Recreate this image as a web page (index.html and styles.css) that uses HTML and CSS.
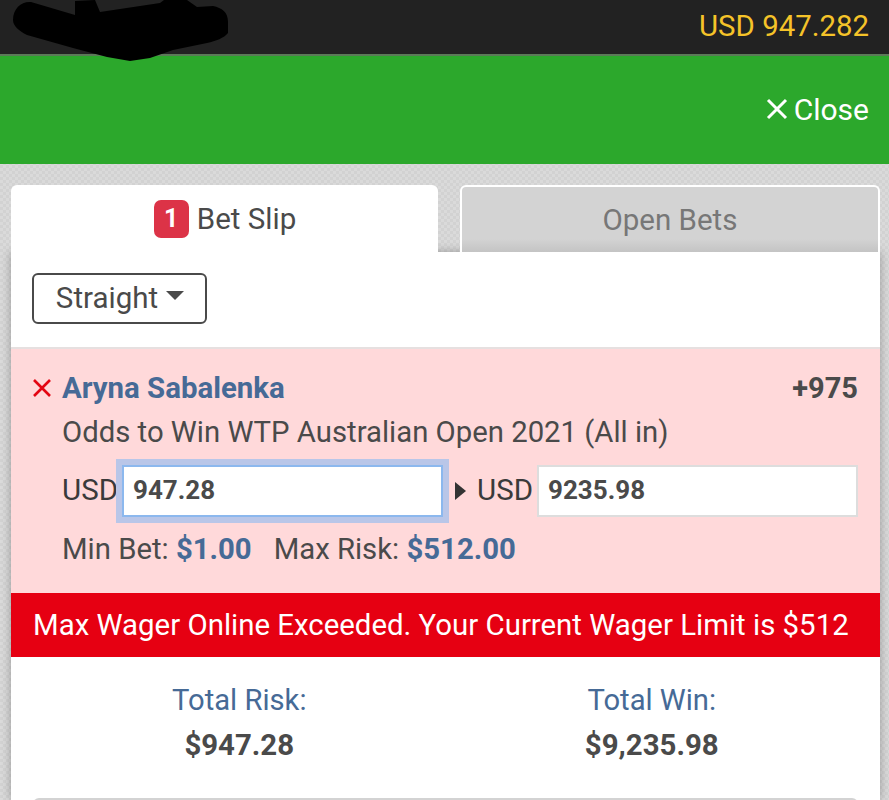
FILE: index.html
```html
<html>
<head>
    <link rel="stylesheet" href="styles.css">
</head>
<body>
<div class="topBar">
    <span class="balance">USD 947.282</span>
    <svg class="scribble" width="240" height="64" viewBox="0 0 240 64">
        <path d="M13 20C13 8 22 1 31 2L75 15L75 1L95 0L100 12L160 3L164 0L187 0L197 7L213 6C222 8 228 12 228 22L228 33C224 38 216 41 207 43L173 50L150 58L130 61L107 57L73 48L27 35C19 31 13 26 13 20Z" fill="#000"/>
    </svg>
</div>
<div class="greenBar">
    <span class="closeBtn">
        <svg width="22" height="22" viewBox="0 0 22 22"><path d="M2 2L20 20M20 2L2 20" stroke="#fff" stroke-width="3" fill="none"/></svg>
        Close
    </span>
</div>

<div class="slip">
    <div class="tabs">
        <div class="tab activeTab"><span class="badge">1</span> Bet Slip</div>
        <div class="tab otherTab">Open Bets</div>
    </div>
    <div class="panel">
        <div class="typeRow">
            <div class="typeBtn">Straight <span class="caret"></span></div>
        </div>
        <div class="betBox">
            <div class="betHead">
                <svg class="removeX" width="20" height="20" viewBox="0 0 20 20"><path d="M2 2L18 18M18 2L2 18" stroke="#e30613" stroke-width="2.6" fill="none"/></svg>
                <span class="player">Aryna Sabalenka</span>
                <span class="odds">+975</span>
            </div>
            <div class="betDesc">Odds to Win WTP Australian Open 2021 (All in)</div>
            <div class="inputRow">
                <span class="usd">USD</span>
                <input class="amount riskInput" type="text" value="947.28">
                <span class="arrow"></span>
                <span class="usd">USD</span>
                <input class="amount winInput" type="text" value="9235.98">
            </div>
            <div class="limits">
                <span>Min Bet: <b>$1.00</b></span>
                <span>Max Risk: <b>$512.00</b></span>
            </div>
        </div>
        <div class="errorBar">Max Wager Online Exceeded. Your Current Wager Limit is $512</div>
        <div class="totals">
            <div class="total">
                <div class="totalLabel">Total Risk:</div>
                <div class="totalValue">$947.28</div>
            </div>
            <div class="total">
                <div class="totalLabel">Total Win:</div>
                <div class="totalValue">$9,235.98</div>
            </div>
        </div>
        <div class="nextBtn"></div>
    </div>
</div>
</body>
</html>
```

FILE: styles.css
```css
html, body {
    margin: 0;
    height: 800px;
    overflow: hidden;
}
body {
    position: relative;
    font-family: Roboto, sans-serif;
    color: #4a4a4a;
    background-color: #d6d6d6;
    background-image: repeating-conic-gradient(#d2d2d2 0% 25%, #dadada 0% 50%);
    background-size: 6px 6px;
}
.topBar {
    height: 51px;
    background: #222222;
    border-bottom: 2px solid #5b7a58;
    display: flex;
    justify-content: flex-end;
    align-items: center;
    padding: 0 20px 3px 0;
}
.balance {
    color: #f5c329;
    font-size: 29.4px;
}
.scribble {
    position: absolute;
    left: 0;
    top: 0;
}
.greenBar {
    height: 106px;
    background: #2ca82c;
    display: flex;
    justify-content: flex-end;
    align-items: center;
    padding: 0 20px 2px 0;
}
.closeBtn {
    color: #fff;
    font-size: 30px;
    display: flex;
    align-items: center;
    gap: 6px;
}
.slip {
    margin: 21px 9px 0 11px;
}
.tabs {
    position: relative;
    z-index: 1;
    display: flex;
    justify-content: space-between;
    height: 67px;
}
.tab {
    box-sizing: border-box;
    display: flex;
    align-items: center;
    justify-content: center;
    font-size: 29.5px;
    border-radius: 6px 6px 0 0;
}
.activeTab {
    width: 427px;
    background: #fff;
    gap: 8px;
    padding-left: 1px;
}
.otherTab {
    width: 420px;
    background: linear-gradient(#d3d3d3 80%, #c4c4c4);
    border: 2px solid #fff;
    border-bottom: 0;
    color: #777;
}
.badge {
    width: 35px;
    height: 38px;
    border-radius: 7px;
    background: #dc3347;
    color: #fff;
    font-size: 25px;
    font-weight: 700;
    display: flex;
    align-items: center;
    justify-content: center;
}
.panel {
    background: #fff;
    height: 548px;
    box-shadow: 0 0 9px rgba(0, 0, 0, 0.3);
}
.typeRow {
    padding: 21px 21px 23px;
}
.typeBtn {
    box-sizing: border-box;
    width: 175px;
    height: 51px;
    border: 2px solid #4a4a4a;
    border-radius: 6px;
    font-size: 29.5px;
    display: flex;
    align-items: center;
    justify-content: center;
    gap: 8px;
    padding: 0 0 2px 1px;
}
.caret {
    width: 0;
    height: 0;
    border-left: 9px solid transparent;
    border-right: 9px solid transparent;
    border-top: 9px solid #4a4a4a;
    margin-bottom: 4px;
}
.betBox {
    box-sizing: border-box;
    height: 246px;
    background: #ffd9da;
    border-top: 2px solid #e6e0e0;
    padding: 21px 22px 0 21px;
}
.betHead {
    display: flex;
    align-items: center;
    height: 36px;
}
.removeX {
    margin-right: 10px;
}
.player {
    flex: 1;
    color: #466a96;
    font-size: 29.4px;
    font-weight: 700;
}
.odds {
    font-size: 29px;
    font-weight: 700;
}
.betDesc {
    margin: 8px 0 0 30px;
    font-size: 29.3px;
    line-height: 36px;
}
.inputRow {
    margin: 15px 0 0 30px;
    display: flex;
    align-items: center;
    height: 52px;
    font-size: 29.5px;
}
.usd {
    width: 55px;
    color: #3a3a3a;
    white-space: nowrap;
    padding-bottom: 2px;
}
.amount {
    box-sizing: border-box;
    height: 52px;
    border: 2px solid #ddd;
    background: #fff;
    font-family: Roboto, sans-serif;
    font-size: 26px;
    font-weight: 700;
    color: #4a4a4a;
    padding: 0 9px 2px;
    outline: none;
}
.riskInput {
    width: 321px;
    margin: 0 12px 0 5px;
    border-color: #8cb8ee;
    box-shadow: 0 0 0 6px #b9c6e8;
}
.winInput {
    width: 321px;
    margin-left: 5px;
}
.arrow {
    width: 0;
    height: 0;
    border-top: 9px solid transparent;
    border-bottom: 9px solid transparent;
    border-left: 11px solid #333;
    margin-right: 11px;
}
.limits {
    margin: 14px 0 0 30px;
    display: flex;
    gap: 22px;
    font-size: 29.3px;
    line-height: 36px;
}
.limits b {
    color: #466a96;
}
.errorBar {
    height: 64px;
    background: #e60012;
    color: #fff;
    font-size: 29.4px;
    display: flex;
    align-items: center;
    padding-left: 22px;
}
.totals {
    display: flex;
    padding: 24px 22px 0;
    text-align: center;
}
.total {
    width: 50%;
}
.totalLabel {
    color: #466a96;
    font-size: 29.2px;
    line-height: 38px;
}
.totalValue {
    margin-top: 8px;
    font-size: 29.4px;
    font-weight: 700;
    line-height: 36px;
}
.nextBtn {
    margin: 35px 22px 0;
    height: 40px;
    background: #d3d3d3;
    border-radius: 6px;
}
```
